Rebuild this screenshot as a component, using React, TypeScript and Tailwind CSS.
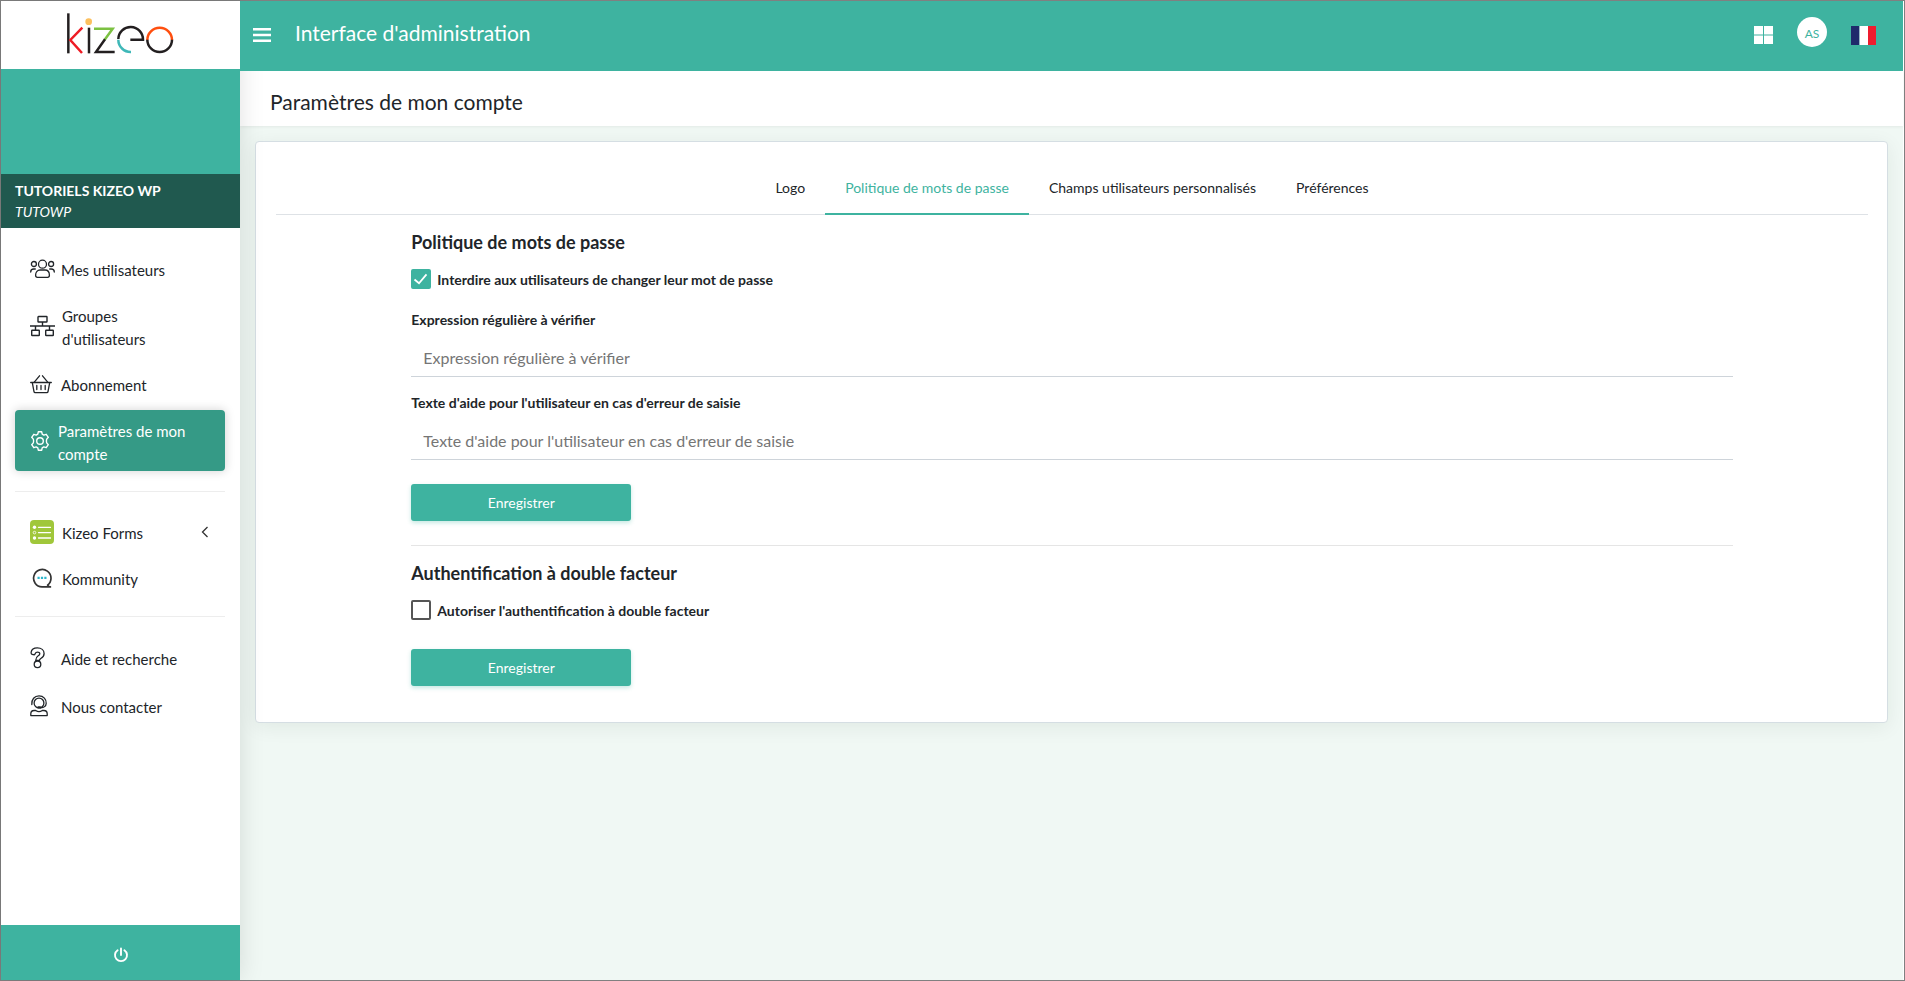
import React from "react";
import clsx from "clsx";

type IconProps = { className?: string };

const KizeoLogo: React.FC<IconProps> = ({ className }) => (
  <svg viewBox="51 23 321 123" fill="none" strokeWidth="7.5" className={className} role="img" aria-label="Kizeo">
    <path d="M55 24v120" stroke="#231f20" />
    <path d="M97 67 61 104 96 143" stroke="#ee1c25" />
    <path d="M117 67v77" stroke="#231f20" />
    <circle cx="116" cy="49" r="10" fill="#fcc05f" />
    <path d="M132 70h56l-24 33" stroke="#7cc142" />
    <path d="M165 102l-27 38h56" stroke="#231f20" />
    <path d="M205 101a37 37 0 0 1 74 2h-38" stroke="#231f20" />
    <path d="M205 103a37 37 0 0 0 38 37" stroke="#3fb8b8" />
    <path d="M292 104a37 37 0 0 1 74 0" stroke="#ff4f0f" />
    <path d="M292 103a37 37 0 0 0 74 0" stroke="#231f20" />
  </svg>
);

const UsersIcon: React.FC = () => (
  <svg width="25" height="20" viewBox="0 0 25 20" fill="none" stroke="currentColor" strokeWidth="1.3" strokeLinecap="round">
    <circle cx="12.5" cy="5.2" r="4" />
    <circle cx="3.9" cy="5" r="2.5" />
    <circle cx="21.1" cy="5" r="2.5" />
    <path d="M5.6 16.2c0-3.4 2-5.2 4.4-5.2h5c2.4 0 4.4 1.8 4.4 5.2 0 1.5-.6 2.1-1.8 2.1H7.4c-1.2 0-1.8-.6-1.8-2.1z" />
    <path d="M.7 13c0-2 1.2-3 3-3h1.6M24.3 13c0-2-1.2-3-3-3h-1.6" />
  </svg>
);

const GroupsIcon: React.FC = () => (
  <svg width="25" height="22" viewBox="0 0 25 22" fill="none" stroke="currentColor" strokeWidth="1.4">
    <rect x="8" y="1.5" width="9" height="5.5" rx=".5" />
    <rect x="1.7" y="15.2" width="7.6" height="5.3" rx=".5" />
    <rect x="15.7" y="15.2" width="7.6" height="5.3" rx=".5" />
    <path d="M0 11h25M12.5 7v4M5.5 11v4M19.5 11v4" />
  </svg>
);

const BasketIcon: React.FC = () => (
  <svg width="22" height="20" viewBox="0 0 22 20" fill="none" stroke="currentColor" strokeWidth="1.3" strokeLinecap="round" strokeLinejoin="round">
    <path d="M.7 8.5h20.6M2.3 8.7l1.7 9c.1.7.5 1 1.2 1h11.6c.7 0 1.1-.3 1.2-1l1.7-9" />
    <path d="M4.3 8.2 9.5 1.8M17.7 8.2l-5.2-6.4M6.8 11.5v4M11 11.5v4M15.2 11.5v4" />
  </svg>
);

const GearIcon: React.FC = () => (
  <svg width="20" height="20" viewBox="0 0 20 20" fill="none" stroke="currentColor" strokeWidth="1.4" strokeLinejoin="round">
    <path d="M8.3.8h3.4l.5 2.4 1.6.9 2.4-.8 2.1 3-1.6 1.8c-.2.6-.2 3.2 0 3.8l1.6 1.8-2.1 3-2.4-.8-1.6.9-.5 2.4H8.3l-.5-2.4-1.6-.9-2.4.8-2.1-3 1.6-1.8c.2-.6.2-3.2 0-3.8L1.7 6.3l2.1-3 2.4.8 1.6-.9z" />
    <circle cx="10" cy="10" r="3.3" />
  </svg>
);

const FormsIcon: React.FC = () => (
  <svg width="24" height="24" viewBox="0 0 24 24">
    <rect width="24" height="24" rx="4" fill="#a0c73a" />
    <g fill="#fff">
      <circle cx="4.5" cy="7.3" r="1.7" />
      <circle cx="4.5" cy="18" r="1.7" />
    </g>
    <circle cx="4.5" cy="12.6" r="1.3" fill="none" stroke="#fff" strokeWidth=".8" />
    <path d="M8.5 7.3h12M8.5 12.6h12M8.5 18h12" stroke="#fff" strokeWidth="1.3" strokeLinecap="round" />
  </svg>
);

const ChatIcon: React.FC = () => (
  <svg width="24" height="20" viewBox="0 0 24 20" fill="none">
    <path d="M17.6 17.1A8.7 8.7 0 1 0 12 18.9h8.4c-1.4-.2-2.2-.7-2.8-1.8z" stroke="#333" strokeWidth="1.7" strokeLinejoin="round" />
    <path d="M7.5 9.8h2.2M10.9 9.8h2.2M14.3 9.8h2.2" stroke="#2eb6cc" strokeWidth="2.2" />
  </svg>
);

const HelpIcon: React.FC = () => (
  <svg width="15" height="22" viewBox="0 0 15 22" fill="none" stroke="currentColor" strokeWidth="1.3" strokeLinejoin="round">
    <path d="M1.1 5.4C1.5 2.6 4 .9 7.3.9c4 0 6.8 2.3 6.8 5.6 0 2.5-1.4 4-3.3 5-1 .6-1.3 1-1.3 2H5.7c0-2.3.7-3.5 2.5-4.7 1.1-.7 1.6-1.2 1.6-2.1 0-1-.9-1.6-2.2-1.6-1.4 0-2.1.5-2.6 1.8-.3.8-.9 1-1.6.8l-1.4-.4c-.7-.2-1-.8-.9-1.9z" />
    <circle cx="7.5" cy="17.3" r="3.3" />
  </svg>
);

const ContactIcon: React.FC = () => (
  <svg width="18" height="22" viewBox="0 0 18 22" fill="none" stroke="currentColor" strokeWidth="1.3" strokeLinecap="round" strokeLinejoin="round">
    <path d="M1.8 9.5C1.4 4.3 4.6.9 9 .9s7.600 3.400 7.200 7.600c-.2 2.700-2.200 4.200-5.700 4.300" />
    <circle cx="9" cy="8" r="4.9" />
    <path d="M8.300 12.400h1.800" strokeWidth="2.200" />
    <path d="M.8 20.600v-1.800c0-2 1.300-3.300 3.300-3.300h1.600c2 1.300 4.600 1.300 6.600 0h1.600c2 0 3.300 1.300 3.300 3.300v1.800z" />
  </svg>
);

type NavItemProps = {
  label: string;
  icon: React.ReactNode;
  iconWidth?: string;
  active?: boolean;
  expandable?: boolean;
};

const NavItem: React.FC<NavItemProps> = ({ label, icon, iconWidth = "w-[25px]", active, expandable }) => (
  <li>
    <a
      href="#"
      aria-current={active ? "page" : undefined}
      className={clsx(
        "flex items-center gap-1.5 rounded pt-1.5 pr-4 pb-[5px] pl-[15px] text-[15px] leading-[23px]",
        active ? "bg-[#359a86] text-white shadow-[0_0_10px_1px_rgba(0,0,0,0.15)]" : "text-[#212529]"
      )}
    >
      <span className={clsx("flex shrink-0", iconWidth)}>{icon}</span>
      <span className="max-w-33 pt-1">{label}</span>
      {expandable && (
        <svg width="8" height="12" viewBox="0 0 8 12" fill="none" stroke="#333" strokeWidth="1.3" className="ml-auto">
          <path d="M6.5 1 1.5 6l5 5" />
        </svg>
      )}
    </a>
  </li>
);

const Sidebar: React.FC = () => (
  <aside className="relative z-10 flex w-[239px] shrink-0 flex-col bg-white shadow-[0_0_24px_rgba(0,0,0,0.12)]">
    <a href="#" className="flex h-[68px] justify-center pt-3">
      <KizeoLogo className="h-[41px] w-[107px]" />
    </a>
    <div className="h-[105px] bg-[#3eb3a0]" />
    <div className="bg-[#20594f] px-3.5 py-1.5 text-sm leading-[21px] text-white">
      <p className="font-bold">TUTORIELS KIZEO WP</p>
      <p className="italic">TUTOWP</p>
    </div>

    <nav className="pt-[21px] pr-[15px] pl-3.5">
      <ul className="flex flex-col gap-2">
        <NavItem label="Mes utilisateurs" icon={<UsersIcon />} />
        <NavItem label="Groupes d'utilisateurs" icon={<GroupsIcon />} iconWidth="w-[26px]" />
        <NavItem label="Abonnement" icon={<BasketIcon />} />
        <NavItem label="Paramètres de mon compte" icon={<GearIcon />} iconWidth="w-[22px]" active />
      </ul>
      <hr className="my-5 border-[#ededed]" />
      <ul className="flex flex-col gap-2">
        <NavItem label="Kizeo Forms" icon={<FormsIcon />} iconWidth="w-[26px]" expandable />
        <NavItem label="Kommunity" icon={<ChatIcon />} iconWidth="w-[26px]" />
      </ul>
      <hr className="mt-5 mb-[21px] border-[#ededed]" />
      <ul className="flex flex-col gap-2.5">
        <NavItem label="Aide et recherche" icon={<HelpIcon />} />
        <NavItem label="Nous contacter" icon={<ContactIcon />} />
      </ul>
    </nav>

    <button type="button" aria-label="Déconnexion" className="mt-auto flex h-[55px] items-center justify-center bg-[#3eb3a0] pt-1 text-white">
      <svg width="16" height="16" viewBox="0 0 16 16" fill="none" stroke="currentColor" strokeWidth="1.9" strokeLinecap="round">
        <path d="M8 1.5v6.5M4.6 3.2a6 6 0 1 0 6.8 0" />
      </svg>
    </button>
  </aside>
);

const Header: React.FC = () => (
  <header className="relative z-20 flex h-[70px] items-center bg-[#3eb3a0] pr-[27px] pb-0.5 pl-[13px] text-white">
    <button type="button" aria-label="Menu">
      <svg width="18" height="14" viewBox="0 0 18 14" fill="currentColor">
        <path d="M0 0h18v2.4H0zM0 5.8h18v2.4H0zM0 11.6h18V14H0z" />
      </svg>
    </button>
    <span className="flex-1 pb-1 pl-6 text-[21px] leading-8">Interface d'administration</span>
    <div className="flex items-center gap-6">
      <button type="button" aria-label="Applications">
        <svg width="19" height="18" viewBox="0 0 19 18" fill="currentColor">
          <path d="M0 0h9v8.5H0zM10 0h9v8.5h-9zM0 9.5h9V18H0zM10 9.5h9V18h-9z" />
        </svg>
      </button>
      <button type="button" aria-label="Profil" className="mb-1.5 h-[30px] w-[30px] rounded-full bg-white pt-1 text-xs text-[#3eb3a0]">
        AS
      </button>
      <button type="button" aria-label="Français">
        <svg width="25" height="19" viewBox="0 0 25 19">
          <path fill="#1f2a6b" d="M0 0h8.5v19H0z" />
          <path fill="#fff" d="M8.5 0H17v19H8.5z" />
          <path fill="#ee1c2e" d="M17 0h8v19h-8z" />
        </svg>
      </button>
    </div>
  </header>
);

const tabs = ["Logo", "Politique de mots de passe", "Champs utilisateurs personnalisés", "Préférences"];

const Checkbox: React.FC<{ id: string; label: string; defaultChecked?: boolean }> = ({ id, label, defaultChecked }) => (
  <div className="mt-[15px] flex items-center gap-1.5">
    <span className="grid h-5 w-5 shrink-0">
      <input
        id={id}
        type="checkbox"
        defaultChecked={defaultChecked}
        className="peer col-start-1 row-start-1 h-5 w-5 appearance-none rounded-xs border-2 border-[#555] bg-white checked:border-[#3eb3a0] checked:bg-[#3eb3a0]"
      />
      <svg
        viewBox="0 0 20 20"
        fill="none"
        stroke="#fff"
        strokeWidth="1.8"
        className="pointer-events-none invisible col-start-1 row-start-1 h-5 w-5 peer-checked:visible"
      >
        <path d="M3.5 10.5 8 14.3l7.5-9" />
      </svg>
    </span>
    <label htmlFor={id} className="pt-0.5 text-sm leading-[18px] font-bold">
      {label}
    </label>
  </div>
);

const TextField: React.FC<{ id: string; label: string }> = ({ id, label }) => (
  <div className="mt-[15px]">
    <label htmlFor={id} className="block text-sm leading-[21px] font-bold">
      {label}
    </label>
    <input
      id={id}
      type="text"
      placeholder={label}
      className="mt-[9px] block h-[38px] w-full border-b border-[#ced4da] px-3 text-base placeholder-[#757575] focus:outline-none"
    />
  </div>
);

const SaveButton: React.FC = () => (
  <button
    type="submit"
    className="block h-[37px] w-[220px] rounded-[3px] bg-[#3eb3a0] text-sm text-white shadow-[0_2px_4px_rgba(62,179,160,0.3)]"
  >
    Enregistrer
  </button>
);

const App: React.FC = () => {
  return (
    <div className="flex min-h-screen border border-[#808080] bg-[#f0f8f4] font-[Lato,sans-serif] text-[#212529]">
      <Sidebar />
      <div className="min-w-0 flex-1 border-r border-white">
        <Header />
        <div className="bg-white px-[30px] pt-[15px] pb-2 shadow-[0_1px_3px_rgba(0,0,0,0.06)]">
          <h1 className="text-[21px] leading-8">Paramètres de mon compte</h1>
        </div>

        <main className="p-[15px]">
          <section className="rounded border border-[#d5dee3] bg-white pr-[19px] pb-9 pl-5 shadow-[0_4px_20px_rgba(0,40,20,0.07)]">
            <nav className="flex justify-center border-b border-[#dee2e6] pt-[25px]">
              {tabs.map((tab, i) => (
                <a
                  key={tab}
                  href="#"
                  className={clsx(
                    "-mb-px border-b-2 px-5 pt-2.5 pb-[15px] text-sm leading-[21px]",
                    i === 1 ? "border-[#3eb3a0] text-[#3eb3a0]" : "border-transparent"
                  )}
                >
                  {tab}
                </a>
              ))}
            </nav>

            <div className="mx-auto w-[83%]">
              <form className="pt-[15px]" onSubmit={e => e.preventDefault()}>
                <h2 className="text-lg leading-6 font-bold">Politique de mots de passe</h2>
                <Checkbox id="lock-password" label="Interdire aux utilisateurs de changer leur mot de passe" defaultChecked />
                <div className="pt-[5px]">
                  <TextField id="regex" label="Expression régulière à vérifier" />
                  <TextField id="help-text" label="Texte d'aide pour l'utilisateur en cas d'erreur de saisie" />
                </div>
                <div className="mt-6">
                  <SaveButton />
                </div>
              </form>

              <hr className="mt-6 border-[#e5e5e5]" />

              <form className="pt-[15px]" onSubmit={e => e.preventDefault()}>
                <h2 className="text-lg leading-6 font-bold">Authentification à double facteur</h2>
                <Checkbox id="two-factor" label="Autoriser l'authentification à double facteur" />
                <div className="mt-[29px]">
                  <SaveButton />
                </div>
              </form>
            </div>
          </section>
        </main>
      </div>
    </div>
  );
};

export default App;
